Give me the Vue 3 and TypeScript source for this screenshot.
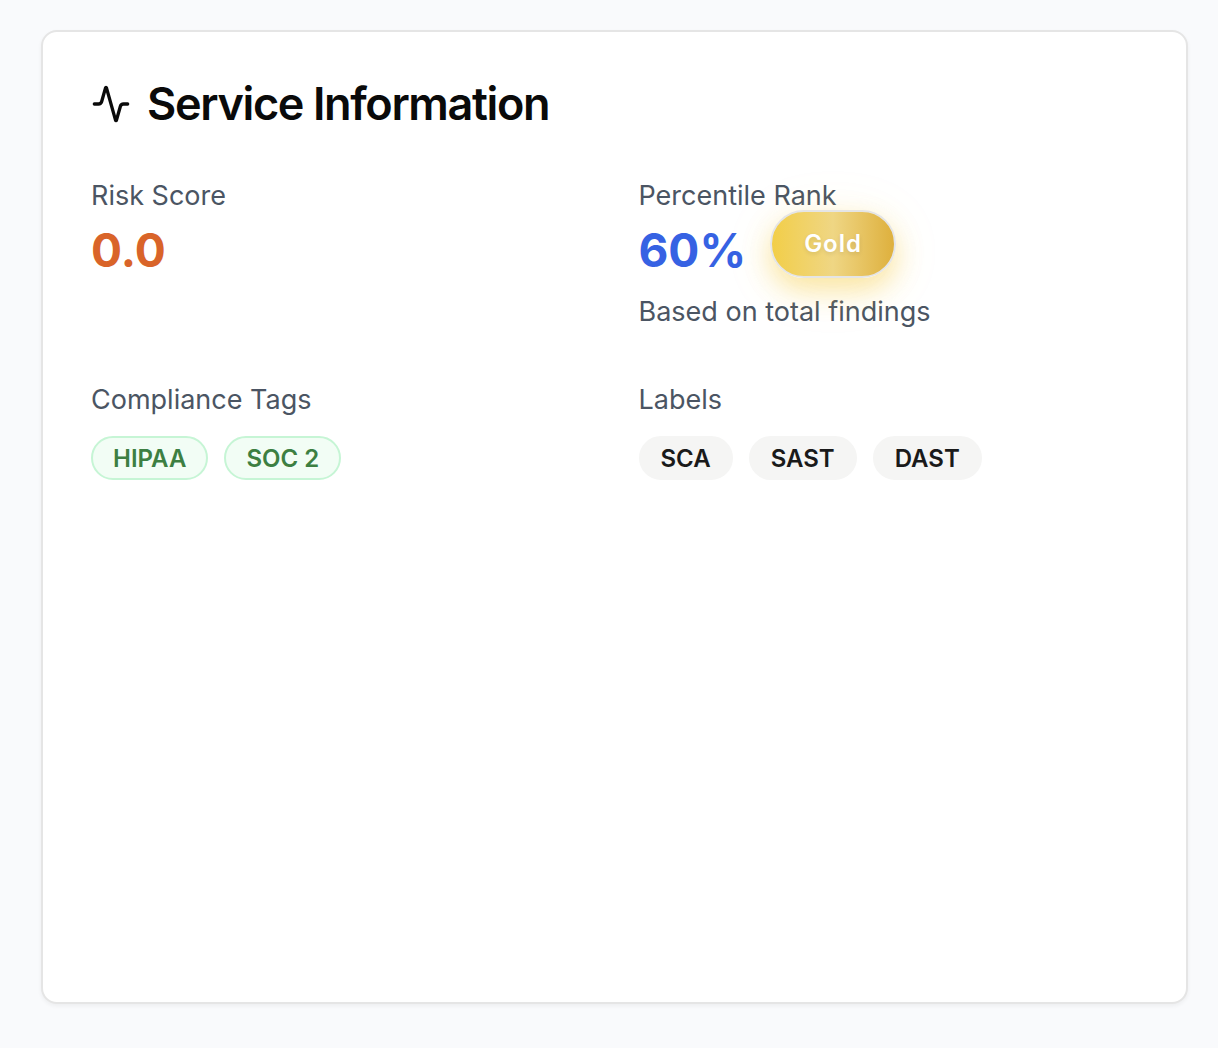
<script setup lang="ts">
const complianceTags: string[] = ['HIPAA', 'SOC 2']
const labels: string[] = ['SCA', 'SAST', 'DAST']
</script>

<template>
  <main class="page">
    <section class="card">
      <h1 class="title">
        <svg class="icon" viewBox="0 0 24 24" aria-hidden="true">
          <path d="M22 12h-2.48a2 2 0 0 0-1.93 1.46l-2.35 8.36a.25.25 0 0 1-.48 0L9.24 2.18a.25.25 0 0 0-.48 0l-2.35 8.36A2 2 0 0 1 4.49 12H2" />
        </svg>
        <span>Service Information</span>
      </h1>
      <div class="grid">
        <div>
          <p class="label">Risk Score</p>
          <p class="value risk">0.0</p>
        </div>
        <div>
          <p class="label">Percentile Rank</p>
          <div class="rank">
            <span class="value percent">60%</span>
            <span class="gold">Gold</span>
          </div>
          <p class="label note">Based on total findings</p>
        </div>
        <div>
          <p class="label">Compliance Tags</p>
          <div class="tags">
            <span v-for="tag in complianceTags" :key="tag" class="tag green">{{ tag }}</span>
          </div>
        </div>
        <div>
          <p class="label">Labels</p>
          <div class="tags">
            <span v-for="label in labels" :key="label" class="tag">{{ label }}</span>
          </div>
        </div>
      </div>
    </section>
  </main>
</template>

<style>
body {
  margin: 0;
  background: #f9fafc;
}
</style>

<style scoped>
.page {
  box-sizing: border-box;
  min-height: 100vh;
  padding: 30px 30px 44px 41px;
  display: flex;
  font-family: Inter, sans-serif;
  color: #0a0a0a;
  background: #f9fafc;
}
.card {
  box-sizing: border-box;
  flex: 1;
  padding: 48px;
  border: 2px solid #e5e5e5;
  border-radius: 16px;
  background: #fff;
  box-shadow: 0 2px 4px rgba(0, 0, 0, 0.05);
}
.title {
  display: flex;
  align-items: center;
  gap: 16px;
  margin: 0;
  font-size: 45px;
  line-height: 48px;
  font-weight: 600;
  letter-spacing: -0.03em;
}
.icon {
  width: 40px;
  height: 40px;
  fill: none;
  stroke: currentColor;
  stroke-width: 2;
  stroke-linecap: round;
  stroke-linejoin: round;
}
.grid {
  display: grid;
  grid-template-columns: 1fr 1fr;
  gap: 48px;
  margin-top: 48px;
}
.label {
  margin: 0;
  font-size: 27px;
  line-height: 40px;
  color: #4b5563;
}
.value {
  margin: 0;
  font-size: 46px;
  line-height: 68px;
  font-weight: 700;
}
.risk {
  color: #d96429;
}
.percent {
  color: #3662e3;
}
.rank {
  display: flex;
  align-items: center;
  gap: 24px;
}
.note {
  margin-top: 8px;
}
/* The rank badge is lifted off the row and casts a golden glow. */
.gold {
  padding: 0 32px;
  border: 2px solid #e5e5e5;
  border-radius: 34px;
  transform: translateY(-6px);
  font-size: 24px;
  line-height: 64px;
  font-weight: 600;
  letter-spacing: 1px;
  color: #fff;
  text-shadow: 0 2px 4px rgba(0, 0, 0, 0.1);
  background: linear-gradient(90deg, #f2ce48, #efd684 50%, #deb03d);
  box-shadow:
    0 12px 28px rgba(246, 204, 70, 0.48),
    0 8px 60px rgba(246, 204, 70, 0.08);
}
.tags {
  display: flex;
  flex-wrap: wrap;
  gap: 16px;
  margin-top: 16px;
}
.tag {
  padding: 5px 20px 3px;
  border: 2px solid #f5f5f4;
  border-radius: 22px;
  font-size: 24px;
  line-height: 32px;
  font-weight: 600;
  color: #1a1a1a;
  background: #f5f5f4;
}
.green {
  color: #3d7f42;
  border-color: #c6f5d5;
  background: #f2fdf5;
}
</style>
